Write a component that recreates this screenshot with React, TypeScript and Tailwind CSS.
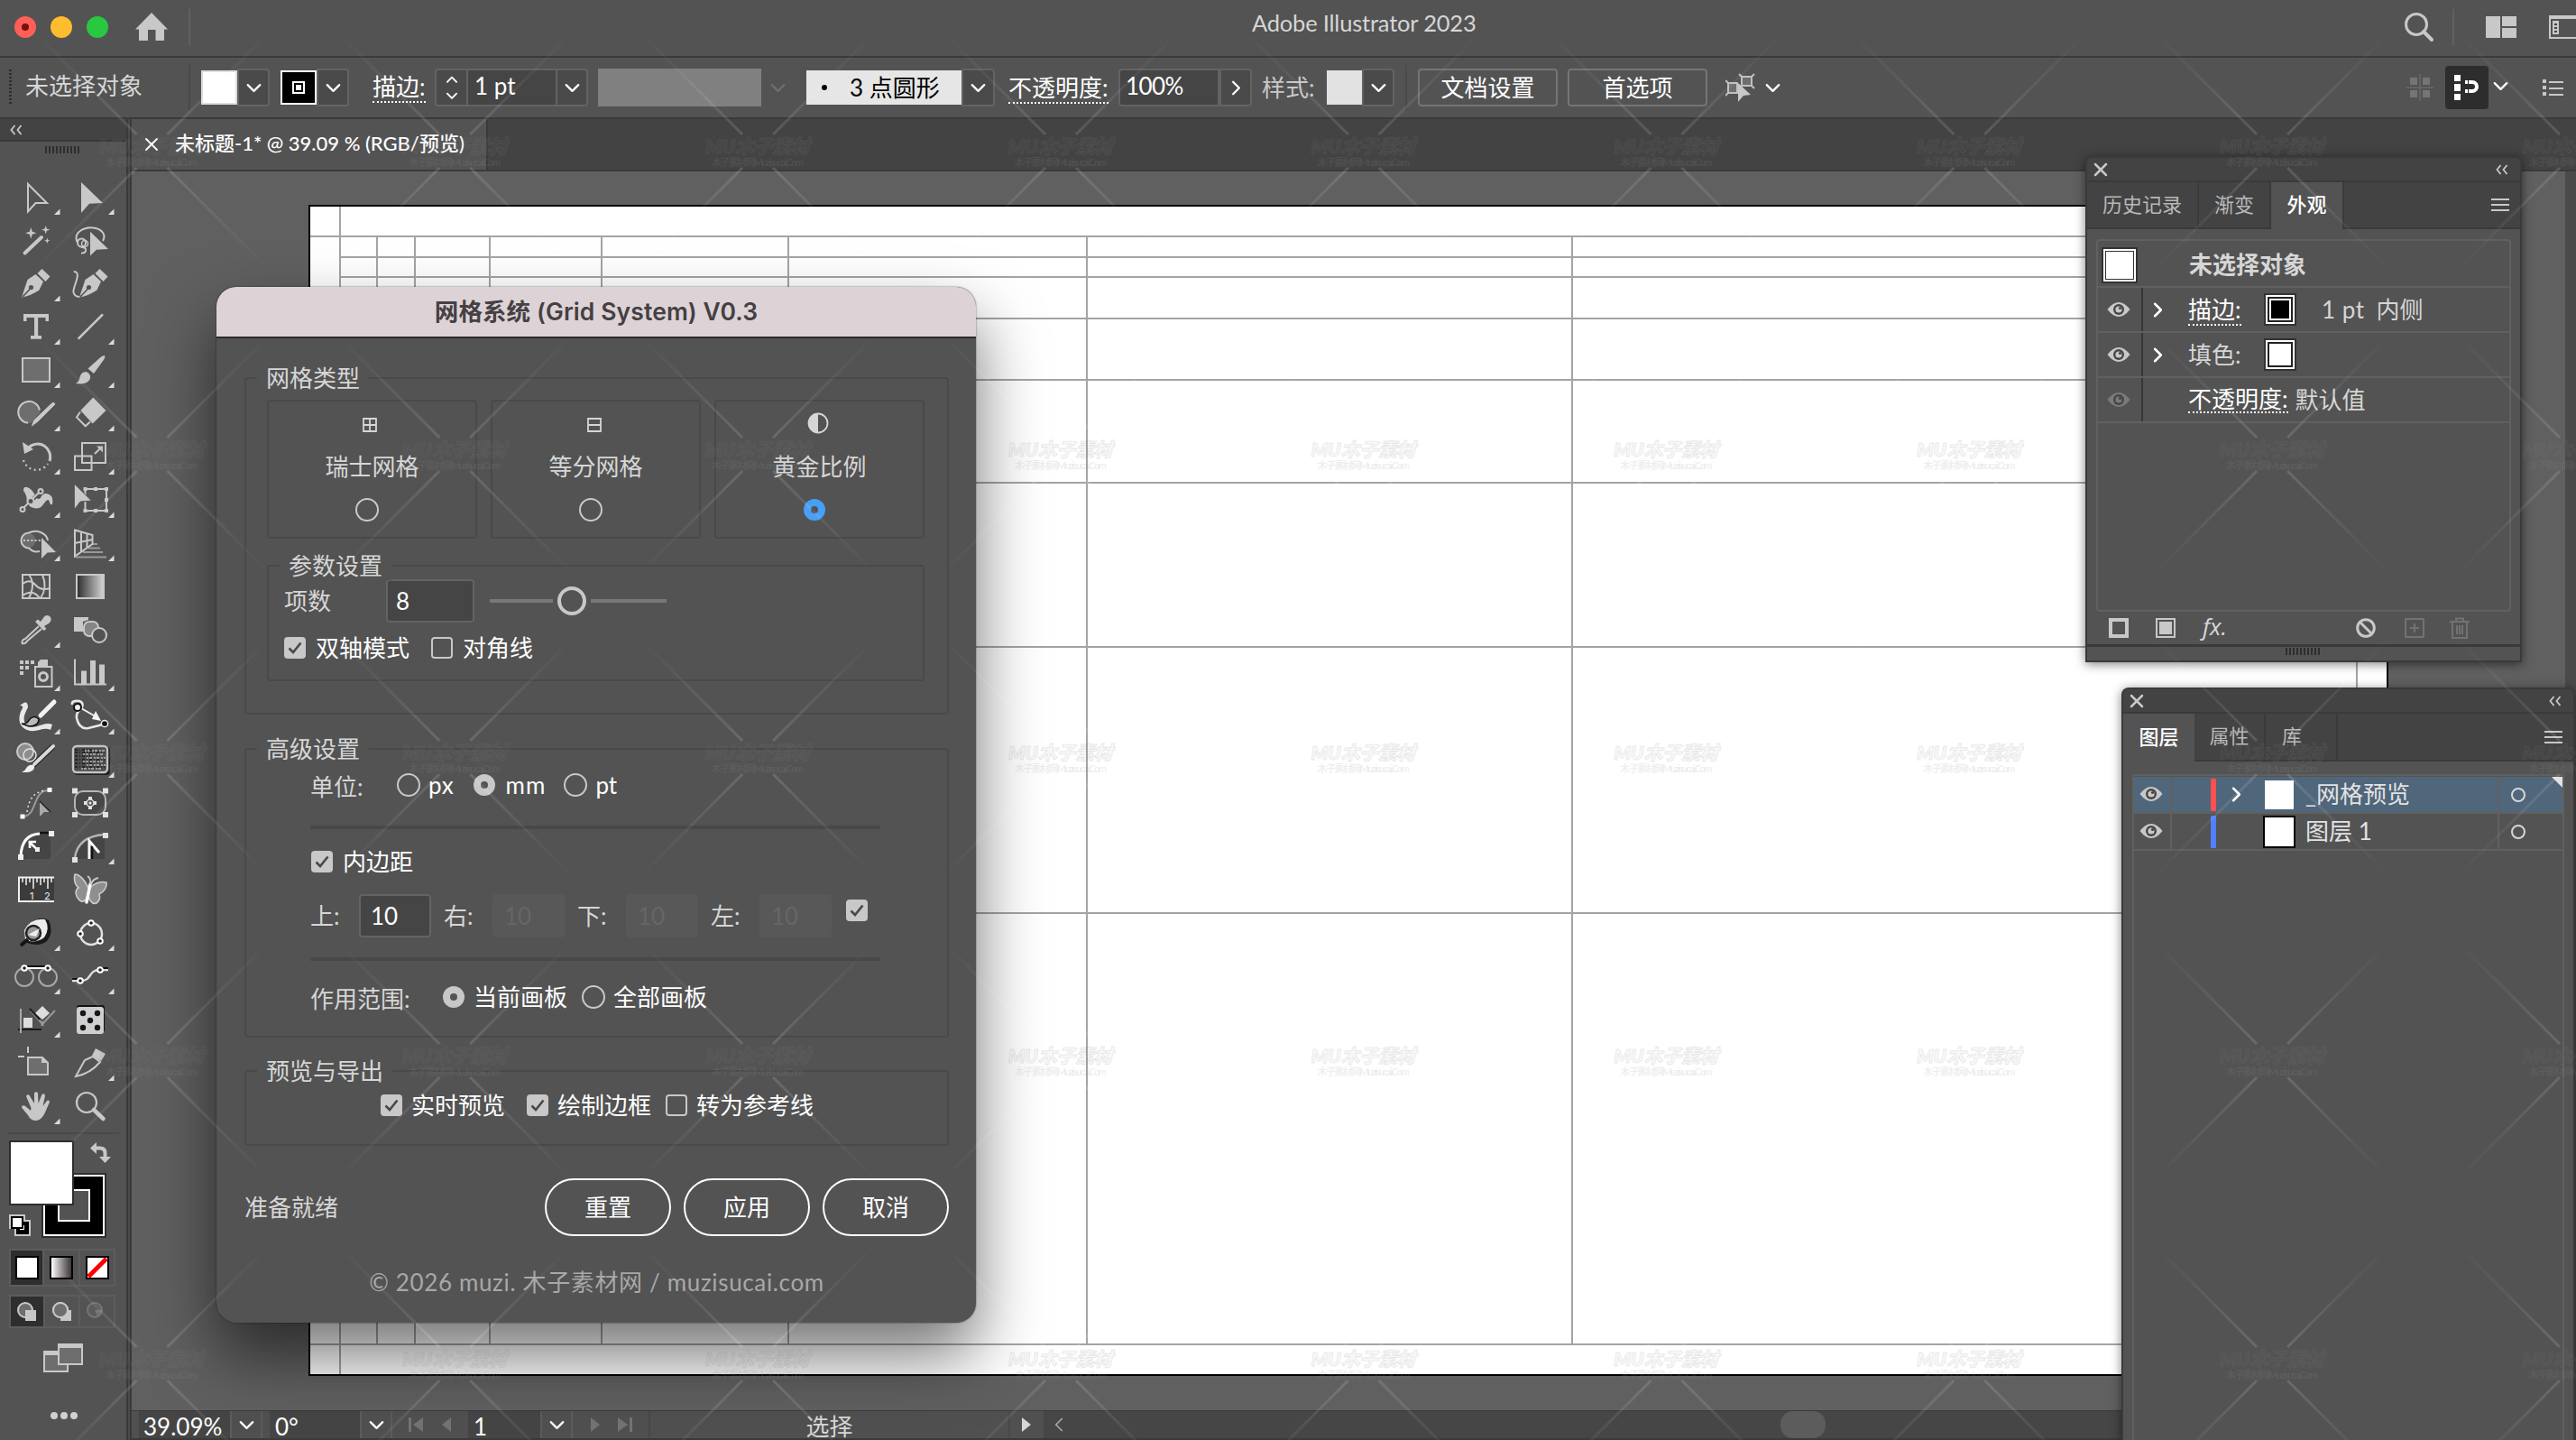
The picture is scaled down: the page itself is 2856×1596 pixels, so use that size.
import type { ReactNode } from 'react'
import clsx from 'clsx'
import { ChevronDown, ChevronLeft, ChevronRight, ChevronUp, X } from 'lucide-react'

type Tool = { id: string; more?: boolean; art: ReactNode }

const line = { fill: 'none', stroke: 'currentColor', strokeWidth: 2 }

const nib = (
  <>
    <path d="M14 38.5 L20.5 19 L29.5 13 L38 21 L33.5 30.5 Q24 37 14 38.5Z" fill="currentColor" />
    <path d="M15 38 L24 28.5" stroke="#535353" strokeWidth="1.6" />
    <circle cx="24.5" cy="27.5" r="2.6" fill="#535353" />
    <path d="M31.5 12 L36.5 7 L45.5 15.5 L40.5 21Z" fill="currentColor" />
  </>
)

const tools: Tool[] = [
  { id: 'select', more: true, art: <path d="M21 9 V39.5 L29.5 30 H42Z" {...line} /> },
  { id: 'direct', more: true, art: <path d="M20 7 V41 L29 30.7 L44 30Z" fill="currentColor" /> },
  {
    id: 'wand',
    art: (
      <>
        <path d="M17.5 37.5 L36 20" stroke="currentColor" strokeWidth="4" strokeLinecap="round" />
        <path d="M24.3 9 L25.8 13.8 L30.5 15.3 L25.8 16.8 L24.3 21.5 L22.8 16.8 L18 15.3 L22.8 13.8Z M40.7 7 L41.8 10.6 L45.3 11.7 L41.8 12.8 L40.7 16.4 L39.6 12.8 L36 11.7 L39.6 10.6Z M42.3 20.5 L43.1 22.9 L45.5 23.7 L43.1 24.5 L42.3 27 L41.5 24.5 L39 23.7 L41.5 22.9Z" fill="currentColor" />
      </>
    ),
  },
  {
    id: 'lasso',
    art: (
      <>
        <path d="M15.5 25 C11 14 24 8.5 33 9.5 C43 10.5 48 17 44 24" {...line} />
        <circle cx="20.5" cy="26" r="4.5" {...line} />
        <circle cx="24" cy="27" r="3.5" {...line} strokeWidth={1.5} />
        <path d="M20 31 Q26 31 25 35 Q24 38 20 37.5" {...line} />
        <path d="M30 13.7 V40.5 L37 33.7 L50 33Z" fill="currentColor" />
      </>
    ),
  },
  { id: 'pen', more: true, art: nib },
  {
    id: 'curvature',
    art: (
      <>
        <g transform="translate(4 0)">{nib}</g>
        <path d="M11.7 10 C22 10 10 28 11.5 33 Q13 38 18 38" {...line} />
      </>
    ),
  },
  { id: 'type', more: true, art: <path d="M16 9 H44 V17 H40.5 V13 H32.2 V33 H36 V36.8 H24 V33 H28 V13 H19.5 V17 H16Z" fill="currentColor" /> },
  { id: 'line', more: true, art: <path d="M16.7 36.7 L44 9.3" {...line} strokeWidth={2.6} /> },
  { id: 'rect', more: true, art: <rect x="15" y="10" width="30" height="26" fill="#6e6e6e" stroke="currentColor" strokeWidth="2" /> },
  {
    id: 'brush',
    more: true,
    art: (
      <>
        <path d="M46 7 Q47 8 45.5 11 L34 27 L27.5 21.5 L42 8.5 Q45 6.5 46 7Z" fill="currentColor" />
        <path d="M25.5 25 Q31 27 30 32.5 Q27 40 14 38 Q18 36 18.5 31 Q20 25 25.5 25Z" fill="currentColor" />
      </>
    ),
  },
  {
    id: 'shaper',
    more: true,
    art: (
      <>
        <circle cx="22.5" cy="22" r="12" fill="#6e6e6e" />
        <path d="M21 33.8 A12 12 0 1 1 34 19.5" {...line} />
        <path d="M47 11.5 Q50 9 52 13 L32 33 L24 39 L26.5 31Z" fill="currentColor" stroke="#535353" strokeWidth="1" />
      </>
    ),
  },
  {
    id: 'eraser',
    more: true,
    art: (
      <>
        <path d="M33.3 5.5 L47.5 20 L32.7 34.5 L19.3 20Z" fill="currentColor" />
        <path d="M19 21.5 L15 27.5 L24.7 37.3 L30 32.5" {...line} />
      </>
    ),
  },
  {
    id: 'rotate',
    more: true,
    art: (
      <>
        <path d="M20 14 C34 2 49 14 45 28" {...line} strokeWidth={3} />
        <path d="M15 7 L17 20 L27 15Z" fill="currentColor" />
        <path d="M16 27 A15 15 0 0 0 43 31" {...line} strokeWidth={2.2} strokeDasharray="2 3.5" />
      </>
    ),
  },
  {
    id: 'scale',
    more: true,
    art: (
      <>
        <rect x="21" y="8" width="26" height="22" {...line} />
        <rect x="13" y="22.5" width="18.5" height="15.5" {...line} />
        <path d="M35 20 L42 13" {...line} />
        <path d="M37 11.5 H44 V18.5Z" fill="currentColor" />
      </>
    ),
  },
  {
    id: 'width',
    more: true,
    art: (
      <>
        <path d="M16 13 Q16 8 20 9 C28 12 29 20 32 22 C36 23 35 16 41 16 Q50 17 48 28 Q46 29 45 26 C44 20 41 24 38 28 C34 35 24 33 20 27 Q20 17 16 13Z" fill="currentColor" />
        <path d="M16 33 L34 15" stroke="#535353" strokeWidth="4" />
        <path d="M16 32 L33 15" {...line} />
        <circle cx="15" cy="33.5" r="2.5" {...line} fill="#535353" />
        <circle cx="35" cy="13.5" r="2.5" {...line} fill="#535353" />
        <circle cx="24" cy="24.5" r="3.5" {...line} fill="#535353" />
      </>
    ),
  },
  {
    id: 'free',
    more: true,
    art: (
      <>
        <rect x="24.5" y="11" width="23.5" height="24" {...line} />
        <path d="M22.5 9 h4 v4 h-4z M34 9 h4 v4 h-4z M46 9 h4 v4 h-4z M46 21 h4 v4 h-4z M46 33 h4 v4 h-4z M34 33 h4 v4 h-4z M22.5 33 h4 v4 h-4z" fill="currentColor" />
        <path d="M12.3 5 V34 L19 25 L31.5 24Z" fill="currentColor" stroke="#535353" />
      </>
    ),
  },
  {
    id: 'builder',
    more: true,
    art: (
      <>
        <circle cx="21" cy="20" r="8.5" fill="#6e6e6e" />
        <path d="M22 11.5 A8.5 8.5 0 1 0 22 28.5 A12.5 12.5 0 0 0 34 32 M22 11.5 A14 12 0 0 1 43 20" {...line} />
        <path d="M16 20 H35" {...line} strokeDasharray="2 2.2" />
        <path d="M36 17 V40 L42.5 33.5 L52 33Z" fill="currentColor" />
      </>
    ),
  },
  {
    id: 'perspective',
    more: true,
    art: (
      <>
        <path d="M13 8.5 L32.5 14 V24 L13 37.5Z M13 23 L32.5 19 M20 10.5 V32 M26.5 12 V28" {...line} />
        <path d="M32 24 H38 M28 28.5 H41 M22 33 H44 M14 38.5 H48" {...line} opacity={0.6} />
      </>
    ),
  },
  {
    id: 'mesh',
    art: <path d="M15 10 H45 V36 H15Z M15 20 Q23 14 29 21 T45 25 M15 33 Q26 25 34 36 M22 10 Q30 20 22 36 M37 10 Q43 24 35 36" {...line} />,
  },
  {
    id: 'gradient',
    art: (
      <>
        <defs>
          <linearGradient id="g1">
            <stop offset="0" stopColor="#2c2c2c" />
            <stop offset="1" stopColor="#d6d6d6" />
          </linearGradient>
        </defs>
        <rect x="15" y="10" width="30" height="26" fill="url(#g1)" stroke="currentColor" strokeWidth="2" />
      </>
    ),
  },
  {
    id: 'eyedropper',
    more: true,
    art: (
      <>
        <path d="M33 19 L18 33 Q14 34 14.5 38 Q18 39 20 35.5 L36 22" {...line} />
        <path d="M29 14 L32 11.5 L35 14 L39 8.5 Q43 5.5 46 9 Q48 13 44 16 L39 19 L41.5 22 L38.5 24Z" fill="currentColor" />
      </>
    ),
  },
  {
    id: 'blend',
    art: (
      <>
        <path d="M12 9 H28 V12 L22 14 V25 H12Z" fill="currentColor" />
        <rect x="23" y="14" width="16" height="16" rx="6" fill="#858585" stroke="currentColor" strokeWidth="2" />
        <circle cx="40" cy="29" r="8" fill="#535353" stroke="currentColor" strokeWidth="2" />
      </>
    ),
  },
  {
    id: 'spray',
    more: true,
    art: (
      <>
        <path d="M12 9 h4 v4 h-4z M18 9 h4 v4 h-4z M24 9 h4 v4 h-4z M12 15 h4 v4 h-4z M18 15 h4 v4 h-4z M12 21 h4 v4 h-4z" fill="currentColor" />
        <path d="M29 16 H47.5 V38 H29Z" {...line} />
        <path d="M32 15 V11 L35 8 H43 V15Z" fill="currentColor" />
        <circle cx="38" cy="27" r="4.5" {...line} strokeWidth={3} />
      </>
    ),
  },
  {
    id: 'chart',
    more: true,
    art: (
      <>
        <path d="M13 7.5 V35.5 H48" {...line} />
        <path d="M20 20.5 h6 V35 h-6z M30 9 h6 V35 h-6z M40 13.5 h6 V35 h-6z" fill="currentColor" />
      </>
    ),
  },
  {
    id: 'ink',
    more: true,
    art: (
      <>
        <path d="M12 11 Q21 3 21 13 C17 20 14 28 20 33 C30 39 38 28 48 32 L46 38 C38 34 30 42 20 38 C8 33 11 20 15 14 Q16 11 12 11Z" fill="#e8e8e8" />
        <path d="M14 31 Q20 32 23 26 Q28 21 33 26 Q33 34 22 34Z" fill="#bbb" stroke="#111" strokeWidth="1.500" />
        <path d="M50 7 L35 22" stroke="#f2f2f2" strokeWidth="5" strokeLinecap="round" />
      </>
    ),
  },
  {
    id: 'warp',
    more: true,
    art: (
      <>
        <path d="M10 10 Q9 5 18 6 Q24 8 20 14 Q14 19 15 25 Q18 38 28 36 L44 32" fill="none" stroke="#e8e8e8" strokeWidth="2.6" />
        <path d="M20 14 L34 22" stroke="#f5f5f5" strokeWidth="2" />
        <path d="M32 26 L36 17 L42 28Z" fill="#f5f5f5" />
        <circle cx="16" cy="13" r="4" fill="#eee" stroke="#111" strokeWidth="2" />
        <circle cx="46" cy="31" r="3.6" fill="#111" stroke="#eee" strokeWidth="1.5" />
      </>
    ),
  },
  {
    id: 'dynamic',
    art: (
      <>
        <circle cx="18" cy="14" r="9" fill="#8d8d8d" stroke="#ccc" strokeWidth="2" />
        <circle cx="23" cy="18" r="7" fill="none" stroke="#e2e2e2" strokeWidth="1.5" />
        <path d="M49 8 L27 29" stroke="#222" strokeWidth="6.500" />
        <path d="M49 8 L28 28" stroke="#d8d8d8" strokeWidth="4" strokeLinecap="round" />
        <path d="M14 37 Q18 35 20 31 Q24 27 28 30 Q29 38 14 37Z" fill="#eee" />
      </>
    ),
  },
  {
    id: 'texture',
    more: true,
    art: (
      <>
        <rect x="12" y="9" width="40" height="31" rx="4" fill="#222" />
        <rect x="11" y="8" width="38" height="29" rx="4" fill="#4c4c4c" stroke="#c4c4c4" strokeWidth="2.4" />
        <path d="M24 13 H46 M22 17 H46 M26 21 H47 M22 25 H46 M26 29 H47 M20 33 H44" stroke="#a0a0a0" strokeWidth="2" strokeDasharray="2 1 3 2" />
        <path d="M13 12 H34 M13 15 H46 M13 19 H30 M13 23 H46 M13 27 H32 M13 31 H46" stroke="#262626" strokeWidth="2" strokeDasharray="3 2 1 2" />
      </>
    ),
  },
  {
    id: 'smart',
    art: (
      <>
        <path d="M15 38 C32 38 25 9 44 9" fill="none" stroke="#9a9a9a" strokeWidth="2" />
        <path d="M20 33 C22 18 28 11 40 9" fill="none" stroke="#ddd" strokeWidth="1.6" strokeDasharray="2 3" />
        <path d="M34 21 V38 L39 33 H46Z" fill="#a8a8a8" />
        <path d="M34 21 L46 33" stroke="#222" strokeWidth="1.5" />
        <path d="M12.5 35.5 h5 v5 h-5z M42.5 6 h5 v5 h-5z" fill="#fff" />
      </>
    ),
  },
  {
    id: 'envelope',
    art: (
      <>
        <rect x="13" y="10" width="34" height="26" rx="9" fill="#474747" stroke="#b5b5b5" strokeWidth="2" />
        <path d="M10 6.5 h6 v6 h-6z M44 6.5 h6 v6 h-6z M10 33 h6 v6 h-6z M44 33 h6 v6 h-6z M28 16 h4 v14 h-4z M23 21 h14 v4 h-14z" fill="#e2e2e2" />
        <circle cx="30" cy="23" r="4" fill="#555" stroke="#e2e2e2" strokeWidth="1.5" />
        <circle cx="30" cy="23" r="1.6" fill="#e2e2e2" />
      </>
    ),
  },
  {
    id: 'corner',
    art: (
      <>
        <path d="M13 38 Q14 9 46 9 V37 H13Z" fill="#454545" />
        <path d="M13 34 Q14 10 34 9" fill="none" stroke="#fff" strokeWidth="3" />
        <path d="M34 8 H46" stroke="#111" strokeWidth="2.5" />
        <path d="M22 18 L33 28 M23 25 V18 H30" fill="none" stroke="#fff" strokeWidth="2.6" />
        <path d="M10 32 h6 v6 h-6z M44 6 h6 v6 h-6z M29 24 h5 v5 h-5z" fill="#eee" />
      </>
    ),
  },
  {
    id: 'extend',
    more: true,
    art: (
      <>
        <path d="M13 37 Q16 12 46 10 V37Z" fill="#454545" />
        <path d="M13 36 Q16 12 46 10" fill="none" stroke="#b5b5b5" strokeWidth="2.4" />
        <path d="M29 37 V17 L40 30" fill="none" stroke="#fff" strokeWidth="3" />
        <path d="M32 37 V23" stroke="#111" strokeWidth="2.5" />
        <path d="M10 35 h6 v6 h-6z M44 8 h6 v6 h-6z" fill="#e2e2e2" />
      </>
    ),
  },
  {
    id: 'ruler',
    art: (
      <>
        <rect x="11" y="9" width="39" height="27" fill="#3c3c3c" />
        <path d="M50 9.5 H11 V36 H50" fill="none" stroke="#f0f0f0" strokeWidth="2" />
        <path d="M15 10 v5 M19 10 v8 M23 10 v5 M27 10 v12 M31 10 v5 M35 10 v8 M39 10 v5 M43 10 v12 M47 10 v5" stroke="#f0f0f0" strokeWidth="1.5" />
        <text x="23" y="34" fontSize="11" fill="#eee" fontFamily="Inter, sans-serif">1</text>
        <text x="39" y="34" fontSize="11" fill="#eee" fontFamily="Inter, sans-serif">2</text>
      </>
    ),
  },
  {
    id: 'butterfly',
    art: (
      <>
        <path d="M28 21 C24 12 18 6 13 6 C11 12 14 19 17 21 C12 24 14 32 20 36 C24 37 27 32 28 28 C28 34 32 40 37 38 C41 35 41 31 40 28 C45 26 49 20 48 15 C41 13 33 17 30 21Z" fill="#8f8f8f" stroke="#ccc" strokeWidth="1.6" />
        <path d="M30 17 L26 37" stroke="#fff" strokeWidth="3.5" strokeLinecap="round" />
        <path d="M30 17 Q31 10 27 8 M31 17 Q33 11 39 10" fill="none" stroke="#ccc" strokeWidth="1.8" />
      </>
    ),
  },
  {
    id: 'magnify',
    more: true,
    art: (
      <>
        <path d="M22 13 Q34 3 44 9 Q50 22 42 32 Q34 39 20 34Z" fill="#191919" />
        <path d="M17 20 Q24 6 40 8 Q46 18 39 28 Q30 35 18 31Z" fill="#ededed" />
        <circle cx="27" cy="23" r="8" fill="#999" stroke="#222" strokeWidth="2.5" />
        <path d="M21 30 L13 37" stroke="#151515" strokeWidth="4" />
        <path d="M21 25 L34 18 L30 27Z" fill="#eee" />
      </>
    ),
  },
  {
    id: 'ring',
    more: true,
    art: (
      <>
        <circle cx="31" cy="24" r="12" fill="none" stroke="#e0e0e0" strokeWidth="2.5" />
        <g fill="#222" stroke="#fff" strokeWidth="2">
          <circle cx="31" cy="12" r="2.8" />
          <circle cx="19" cy="24" r="2.8" />
          <circle cx="41" cy="32" r="2.8" />
        </g>
      </>
    ),
  },
  {
    id: 'tangent',
    more: true,
    art: (
      <>
        <circle cx="17" cy="24" r="10" fill="none" stroke="#a8a8a8" strokeWidth="2" />
        <circle cx="43" cy="24" r="10" fill="none" stroke="#a8a8a8" strokeWidth="2" />
        <path d="M17 14 H43" stroke="#fff" strokeWidth="2" />
        <path d="M20 12 H40" stroke="#111" strokeWidth="2" />
        <circle cx="17" cy="14" r="2.8" fill="#222" stroke="#fff" strokeWidth="2" />
        <circle cx="43" cy="14" r="2.8" fill="#222" stroke="#fff" strokeWidth="2" />
      </>
    ),
  },
  {
    id: 'connect',
    more: true,
    art: (
      <>
        <path d="M10 28 H20 C32 28 28 16 40 16 H50" fill="none" stroke="#ddd" strokeWidth="2.4" />
        <path d="M10 26 H16 M44 14 H50" stroke="#111" strokeWidth="2" />
        <circle cx="19" cy="28" r="2.8" fill="#222" stroke="#fff" strokeWidth="2" />
        <circle cx="41" cy="16" r="2.8" fill="#222" stroke="#fff" strokeWidth="2" />
      </>
    ),
  },
  {
    id: 'orient',
    more: true,
    art: (
      <>
        <path d="M10 34 H36" stroke="#1c1c1c" strokeWidth="2" />
        <path d="M13 11 V38" stroke="#aaa" strokeWidth="2" />
        <path d="M16 21 h10 v11 h-10z M37 8 L45 16 L37 23 L29 16Z" fill="#ddd" />
        <path d="M24 13 L37 28 L51 13" fill="none" stroke="#999" strokeWidth="2" />
        <path d="M23 11 L34 23" stroke="#1c1c1c" strokeWidth="2" />
        <path d="M37 25 V30" stroke="#999" strokeWidth="3" />
      </>
    ),
  },
  {
    id: 'dice',
    art: (
      <>
        <rect x="15" y="7" width="31" height="30" rx="3" fill="#111" />
        <rect x="15" y="9" width="30" height="30" rx="3" fill="#cfcfd2" />
        <g fill="#161616">
          <circle cx="22" cy="16" r="3.2" />
          <circle cx="38" cy="16" r="3.2" />
          <circle cx="30" cy="24" r="3.2" />
          <circle cx="22" cy="32" r="3.2" />
          <circle cx="38" cy="32" r="3.2" />
        </g>
      </>
    ),
  },
  {
    id: 'artboard',
    art: (
      <>
        <path d="M10 16 H17 M21 5 V12" {...line} />
        <path d="M21 17 H37 L43 23 V36 H21Z" fill="#6e6e6e" stroke="currentColor" strokeWidth="2" />
        <path d="M36 16 V23 H43Z" fill="currentColor" />
      </>
    ),
  },
  {
    id: 'slice',
    more: true,
    art: (
      <>
        <path d="M14 38 L24 20 L33 16 L41 22 Q30 35 14 38Z" {...line} />
        <path d="M36 7 L47 13 L42 21 L32 15Z" fill="currentColor" />
      </>
    ),
  },
  {
    id: 'hand',
    more: true,
    art: <path d="M24.5 25 L19 12 Q20 9 22.5 11 L28 20 L28 8.5 Q30 6 32 8.5 L32.5 20 L36.5 10 Q39.5 8 40 11.5 L37.5 23 L42 17 Q45 15.5 45 18.5 L39 32 Q35 39 30 39 Q24 39 21 33 L14 24.5 Q14 21.5 17.5 22.5 L24 28Z" fill="currentColor" />,
  },
  {
    id: 'zoom',
    art: (
      <>
        <circle cx="26" cy="19" r="11" {...line} strokeWidth={2.2} />
        <path d="M34 27 L44.5 37" stroke="currentColor" strokeWidth="4.5" strokeLinecap="round" />
      </>
    ),
  },
]

const fib = [0, 1, 2, 4, 7, 12, 20, 33, 54]

function Artboard() {
  return (
    <div className="absolute left-[196px] top-[37px] h-[1298px] w-[2306px] border-2 border-black bg-white">
      <svg width="2302" height="1294" className="block" shapeRendering="crispEdges" stroke="#a4a4a4" strokeWidth="2">
        {fib.map((n, i) => {
          const edge = i === 0 || i === 8
          const x = Math.round(33 + n * 41.4)
          const y = Math.round(33 + n * 22.74)
          return (
            <g key={n}>
              <path d={`M${x} ${edge ? 0 : 33} V${edge ? 1294 : 1261}`} />
              <path d={`M${edge ? 0 : 33} ${y} H${edge ? 2302 : 2268}`} />
            </g>
          )
        })}
      </svg>
    </div>
  )
}

function Check({ on, children }: { on?: boolean; children?: ReactNode }) {
  return (
    <span className="flex h-6 items-center gap-[10px] text-white">
      <span className={clsx('flex h-6 w-6 items-center justify-center rounded', on ? 'bg-[#c8c8c8]' : 'border-2 border-[#c8c8c8]')}>
        {on && (
          <svg width="18" height="18" viewBox="0 0 18 18" fill="none" stroke="#484848" strokeWidth="2.6">
            <path d="M2.5 9.5 L7 14 L15.5 3.5" />
          </svg>
        )}
      </span>
      {children}
    </span>
  )
}

function Radio({ on, blue, children }: { on?: boolean; blue?: boolean; children?: ReactNode }) {
  return (
    <span className="flex items-center gap-[9px] text-white">
      <span className="flex h-[26px] w-[26px] items-center justify-center">
        {on ? (
          <span className={clsx('h-6 w-6 rounded-full border-8', blue ? 'border-[#46a0f5]' : 'border-[#c8c8c8]')} />
        ) : (
          <span className="h-[26px] w-[26px] rounded-full border-2 border-[#c8c8c8]" />
        )}
      </span>
      {children}
    </span>
  )
}

function Group({ title, className, children }: { title: string; className?: string; children: ReactNode }) {
  return (
    <section className={clsx('relative rounded border-2 border-[#494949]', className)}>
      <h3 className="absolute -top-px left-[12px] -translate-y-1/2 bg-[#535353] px-[10px] leading-8 text-[#d6d6d6]">{title}</h3>
      {children}
    </section>
  )
}

const gridTypes = [
  { name: '瑞士网格', icon: <path d="M1 1 H15 V15 H1Z M8 1 V15 M1 8 H15" fill="none" stroke="#d6d6d6" strokeWidth="1.8" /> },
  { name: '等分网格', icon: <path d="M2 1 H16 V15 H2Z M2 8 H16" fill="none" stroke="#d6d6d6" strokeWidth="1.8" /> },
  {
    name: '黄金比例',
    on: true,
    icon: (
      <>
        <circle cx="9" cy="6" r="10.5" fill="none" stroke="#d6d6d6" strokeWidth="1.8" />
        <path d="M9 -4.5 A10.5 10.5 0 0 0 9 16.5Z" fill="#d6d6d6" />
      </>
    ),
  },
]

function GridDialog() {
  return (
    <div className="absolute left-[240px] top-[318px] flex h-[1148px] w-[842px] flex-col overflow-hidden rounded-[22px] bg-[#535353] text-[26px] leading-8 text-[#d6d6d6] shadow-[0_36px_72px_rgba(0,0,0,0.55),0_0_2px_rgba(0,0,0,0.6)]">
      <div className="flex h-[57px] shrink-0 items-center justify-center border-b-2 border-[#2f282b] bg-[#ddd3d7] pb-[2px] font-['Inter','Noto_Sans_CJK_SC',sans-serif] text-[26.5px] font-semibold tracking-[0.1px] text-[#454043]">
        网格系统 (Grid System) V0.3
      </div>
      <div className="flex flex-1 flex-col pl-[31px] pr-[30px]">
        <Group title="网格类型" className="mt-[43px] h-[374px] px-[23px] pt-[23px]">
          <div className="flex gap-[15px]">
            {gridTypes.map((t) => (
              <div key={t.name} className="flex h-[154px] w-[233px] flex-col items-center rounded border-2 border-[#494949]">
                <svg width="16" height="16" viewBox="0 0 16 16" className="mt-[18px] -ml-[6px] shrink-0 overflow-visible">{t.icon}</svg>
                <span className="mt-[22px]">{t.name}</span>
                <span className="mt-[19px] -ml-[12px]"><Radio on={t.on} blue /></span>
              </div>
            ))}
          </div>
          <Group title="参数设置" className="mt-[29px] h-[129px] w-[729px] pl-[17px] pt-[14px]">
            <div className="flex h-[48px] items-center">
              <span className="w-[113px]">项数</span>
              <span className="flex h-[48px] w-[98px] items-center rounded border-2 border-[#636363] bg-[#454545] pl-[9px] text-white">8</span>
              <span className="ml-[17px] h-1 w-[70px] bg-[#787878]" />
              <span className="mx-[5px] h-8 w-8 rounded-full border-4 border-[#c8c8c8]" />
              <span className="h-1 w-[84px] bg-[#787878]" />
            </div>
            <div className="mt-[16px] flex gap-[24px]">
              <Check on><span className="ml-px">双轴模式</span></Check>
              <Check><span className="ml-px">对角线</span></Check>
            </div>
          </Group>
        </Group>

        <Group title="高级设置" className="mt-[37px] h-[321px] pl-[71px] pt-[15px]">
          <div className="flex h-[48px] items-center">
            <span className="w-[96px] pt-1">单位:</span>
            <Radio><span className="tracking-[0.8px]">px</span></Radio>
            <span className="ml-[20px]"><Radio on><span className="ml-[2px] tracking-[1px]">mm</span></Radio></span>
            <span className="ml-[20px]"><Radio>pt</Radio></span>
          </div>
          <div className="mt-[21px] h-1 w-[632px] bg-[#484848]" />
          <div className="mt-[24px] pl-[1px]"><Check on><span className="ml-px">内边距</span></Check></div>
          <div className="mt-[24px] flex h-[48px] items-center">
            <span className="w-[54px]">上:</span>
            <span className="flex h-full w-[80px] items-center rounded border-2 border-[#636363] bg-[#454545] pl-[11px] text-white">10</span>
            {['右', '下', '左'].map((s) => (
              <span key={s} className="flex h-full items-center">
                <span className="ml-[14px] w-[54px]">{s}:</span>
                <span className="flex h-full w-[80px] items-center rounded bg-[#585858] pl-[13px] text-[#666]">10</span>
              </span>
            ))}
            <span className="-mt-[12px] ml-[16px]"><Check on /></span>
          </div>
          <div className="mt-[22px] h-1 w-[632px] bg-[#484848]" />
          <div className="mt-[20px] flex h-[40px] items-center">
            <span className="w-[146px] pt-1">作用范围:</span>
            <Radio on>当前画板</Radio>
            <span className="ml-[16px]"><Radio>全部画板</Radio></span>
          </div>
        </Group>

        <Group title="预览与导出" className="mt-[36px] h-[84px] pl-[149px] pt-[25px]">
          <div className="flex">
            <Check on>实时预览</Check>
            <span className="ml-[24px]"><Check on>绘制边框</Check></span>
            <span className="ml-[16px]"><Check>转为参考线</Check></span>
          </div>
        </Group>

        <div className="mt-[36px] flex h-[64px] items-center gap-[14px]">
          <span className="flex-1">准备就绪</span>
          {['重置', '应用', '取消'].map((b) => (
            <button key={b} className="h-[64px] w-[140px] rounded-full border-2 border-white text-white">{b}</button>
          ))}
        </div>
        <p className="mt-[35px] whitespace-nowrap text-center tracking-[0.65px] text-[#a8a8a8]">© 2026 muzi. 木子素材网 / muzisucai.com</p>
      </div>
    </div>
  )
}

function Eye({ dim }: { dim?: boolean }) {
  return (
    <svg width="26" height="18" viewBox="0 0 26 18" className={dim ? 'text-[#7a7a7a]' : 'text-[#c8c8c8]'}>
      <path d="M0.5 9 Q13 -7 25.5 9 Q13 25 0.5 9Z" fill="currentColor" />
      <circle cx="13" cy="9" r="6" fill="#454545" />
      <circle cx="13" cy="9" r="3.6" fill="currentColor" />
      <circle cx="14.5" cy="7.5" r="1.6" fill="#454545" />
    </svg>
  )
}

function Collapse() {
  return (
    <svg width="14" height="12" viewBox="0 0 14 12" fill="none" stroke="#c8c8c8" strokeWidth="1.8">
      <path d="M5.5 1 L1.5 6 L5.5 11 M12.5 1 L8.5 6 L12.5 11" />
    </svg>
  )
}

function PanelHead() {
  return (
    <div className="flex h-[27px] shrink-0 items-center justify-between border-b-2 border-[#3a3a3a] bg-[#434343] pl-[3px] pr-[13px]">
      <X size={24} strokeWidth={2.5} color="#c8c8c8" />
      <Collapse />
    </div>
  )
}

function MenuIcon() {
  return (
    <svg width="20" height="14" className="ml-auto mr-[12px]" fill="#c8c8c8">
      <path d="M0 0 h20 v2 h-20z M0 6 h20 v2 h-20z M0 12 h20 v2 h-20z" />
    </svg>
  )
}

function PanelTab({ on, className, children }: { on?: boolean; className: string; children: ReactNode }) {
  return (
    <span className={clsx('flex h-full items-center justify-center', className, on ? 'bg-[#535353] pb-[3px] font-medium text-white' : 'border-b-2 border-r-2 border-[#3a3a3a] pb-[2px] text-[#b8b8b8]')}>
      {children}
    </span>
  )
}

function AppearancePanel() {
  const row = 'flex h-[50px] items-center border-b-2 border-[#606060]'
  const eye = 'flex h-full w-[50px] items-center justify-center border-r-2 border-[#363636] pr-[2px]'
  return (
    <div className="absolute left-[2312px] top-[173px] flex h-[561px] w-[484px] flex-col overflow-hidden rounded-t-lg border-2 border-[#3a3a3a] bg-[#535353] text-[26px] text-[#d6d6d6] shadow-[0_2px_12px_rgba(0,0,0,0.5)]">
      <PanelHead />
      <div className="flex h-[52px] items-center bg-[#434343] text-[22px]">
        <PanelTab className="w-[124px]">历史记录</PanelTab>
        <PanelTab className="w-[80px]">渐变</PanelTab>
        <PanelTab on className="w-[79px]">外观</PanelTab>
        <div className="flex h-full flex-1 items-center border-b-2 border-l-2 border-[#3a3a3a]">
          <MenuIcon />
        </div>
      </div>
      <div className="ml-[10px] mt-[11px] h-[413px] w-[460px] rounded border-2 border-[#606060]">
        <div className="flex h-[52px] items-center border-b-2 border-[#606060] pt-[3px]">
          <span className="ml-[4px] h-10 w-10 border-2 border-[#333] bg-white p-[2px]"><span className="block h-full w-full border border-[#333]" /></span>
          <span className="ml-[57px] font-bold">未选择对象</span>
        </div>
        <div className={row}>
          <span className={eye}><Eye /></span>
          <ChevronRight size={27} strokeWidth={2.2} className="ml-[3px] text-white" />
          <span className="ml-[20px] w-[84px] text-white"><span className="border-b-2 border-dotted border-white leading-7">描边:</span></span>
          <span className="h-9 w-9 border-2 border-[#333] bg-white p-[2px]">
            <span className="block h-full w-full border-2 border-[#222] bg-white p-[2px]"><span className="block h-full w-full bg-black" /></span>
          </span>
          <span className="ml-[28px] tracking-[0.5px]">1 pt</span>
          <span className="ml-[13px]">内侧</span>
        </div>
        <div className={row}>
          <span className={eye}><Eye /></span>
          <ChevronRight size={27} strokeWidth={2.2} className="ml-[3px] text-white" />
          <span className="ml-[20px] w-[84px]">填色:</span>
          <span className="h-9 w-9 border-2 border-[#333] bg-white p-[2px]"><span className="block h-full w-full border-2 border-[#222]" /></span>
        </div>
        <div className={row}>
          <span className={eye}><Eye dim /></span>
          <span className="ml-[50px] border-b-2 border-dotted border-white leading-7 text-white">不透明度:</span>
          <span className="ml-[8px]">默认值</span>
        </div>
      </div>
      <div className="flex h-[39px] items-center border-b-[3px] border-[#3a3a3a] pl-[24px]">
        <span className="h-[22px] w-[22px] border-4 border-[#c8c8c8]" />
        <span className="ml-[30px] h-[22px] w-[22px] border-2 border-[#c8c8c8] p-[2px]"><span className="block h-full w-full bg-[#c8c8c8]" /></span>
        <span className="ml-[30px] w-[157px] font-['Open_Sans',sans-serif] text-[26px] italic leading-7">
          <span className="-mt-1 block">fx.</span>
        </span>
        <svg width="22" height="22" viewBox="0 0 22 22" className="ml-[13px]" fill="none" stroke="#c8c8c8" strokeWidth="3">
          <circle cx="11" cy="11" r="9.3" />
          <path d="M4.5 4.5 L17.5 17.5" />
        </svg>
        <svg width="22" height="22" viewBox="0 0 22 22" className="ml-[32px]" fill="none" stroke="#727272" strokeWidth="2">
          <path d="M1 1 H21 V21 H1Z M11 6 V16 M6 11 H16" />
        </svg>
        <svg width="22" height="24" viewBox="0 0 22 24" className="ml-[28px]" fill="none" stroke="#727272" strokeWidth="2">
          <path d="M0 5 H22 M7 5 V1.5 H15 V5 M3 5 V23 H19 V5 M8 9 V19 M11 9 V19 M14 9 V19" />
        </svg>
      </div>
      <Grip className="ml-[220px] mt-[1px] w-[38px]" />
    </div>
  )
}

function Grip({ className }: { className: string }) {
  return <div className={clsx('h-2 bg-[repeating-linear-gradient(90deg,#2e2e2e_0_2px,transparent_2px_4px)]', className)} />
}

const layers = [
  { name: '_网格预览', bar: 'bg-[#ff4f4f]', on: true },
  { name: '图层 1', bar: 'bg-[#4f80ff]' },
]

function LayersPanel() {
  return (
    <div className="absolute left-[2352px] top-[762px] flex h-[834px] w-[503px] flex-col overflow-hidden rounded-t-lg border-x-2 border-t-2 border-[#3a3a3a] bg-[#535353] text-[26px] text-[#e2e2e2] shadow-[0_2px_12px_rgba(0,0,0,0.5)]">
      <PanelHead />
      <div className="flex h-[53px] items-center bg-[#434343] text-[22px]">
        <PanelTab on className="w-[79px]">图层</PanelTab>
        <PanelTab className="w-[79px]">属性</PanelTab>
        <PanelTab className="w-[80px] pr-[20px]">库</PanelTab>
        <div className="flex h-full flex-1 items-center border-b-2 border-[#3a3a3a]">
          <MenuIcon />
        </div>
      </div>
      <div className="ml-[10px] mt-[14px] w-[479px] flex-1 border-x-2 border-t-2 border-[#606060] pt-px">
        {layers.map((l) => (
          <div key={l.name} className={clsx('relative flex h-[41px] items-center border-b-2 border-[#606060]', l.on && 'bg-[#50667b]')}>
            <span className="flex h-full w-[42px] items-center justify-center border-r-2 border-[#606060] pb-[2px] pr-[2px]"><Eye /></span>
            <span className={clsx('ml-[43px] h-[36px] w-[6px]', l.bar)} />
            <span className="ml-[9px] w-[43px]">{l.on && <ChevronRight size={27} strokeWidth={2.2} className="text-white" />}</span>
            <span className={clsx('h-9 w-9 bg-white', l.on ? 'border-2 border-[#50667b]' : 'border-2 border-black')} />
            <span className="ml-[11px] flex-1">{l.name}</span>
            <span className="flex h-full w-[72px] items-center border-l-2 border-[#606060] pl-[13px]">
              <span className="h-4 w-4 rounded-full border-2 border-[#d6d6d6]" />
            </span>
            {l.on && <svg width="12" height="12" className="absolute right-0 top-0"><path d="M0 0 H12 V12Z" fill="#e2e2e2" /></svg>}
          </div>
        ))}
      </div>
    </div>
  )
}

function Drop({ className = 'w-[36px]', dim, children }: { className?: string; dim?: boolean; children?: ReactNode }) {
  return (
    <span className={clsx('flex h-[42px] items-center justify-center rounded-r border-2', dim ? 'border-transparent text-[#6e6e6e]' : 'border-[#636363] bg-[#4a4a4a] text-white', className)}>
      {children ?? <ChevronDown size={27} strokeWidth={2} />}
    </span>
  )
}

function ControlBar() {
  return (
    <div className="flex h-[68px] shrink-0 items-center border-b-2 border-[#3a3a3a] text-[26px]">
      <span className="ml-[10px] h-[40px] w-[3px] bg-[repeating-linear-gradient(180deg,#2e2e2e_0_2px,transparent_2px_4px)]" />
      <span className="ml-[15px] w-[181px] pb-[3px] text-[#d6d6d6]">未选择对象</span>
      <span className="h-[50px] w-[2px] bg-[#4a4a4a]" />
      <span className="ml-[12px] h-[38px] w-[40px] border-2 border-[#ddd] bg-white" />
      <Drop />
      <span className="ml-[12px] flex h-[38px] w-[40px] items-center justify-center border-2 border-white bg-black">
        <span className="h-[14px] w-[14px] border-2 border-white p-[2px]"><span className="block h-full w-full bg-white" /></span>
      </span>
      <Drop />
      <span className="ml-[26px] w-[69px] pb-[2px] text-white"><span className="border-b-2 border-dotted border-white leading-7">描边:</span></span>
      <span className="flex h-[42px] w-[37px] flex-col items-center justify-center rounded-l border-2 border-[#636363] bg-[#4a4a4a] text-white">
        <ChevronUp size={24} strokeWidth={2.2} className="-mb-[3px]" />
        <ChevronDown size={24} strokeWidth={2.2} />
      </span>
      <span className="flex h-[42px] w-[97px] items-center border-y-2 border-[#636363] bg-[#454545] pb-[4px] pl-[7px] text-white">1 pt</span>
      <Drop />
      <span className="ml-[11px] h-[42px] w-[181px] bg-[#808080]" />
      <Drop dim />
      <span className="ml-[14px] flex h-[38px] w-[172px] items-center bg-[#e6e6e6] text-black">
        <span className="ml-[17px] h-[6px] w-[6px] rounded-full bg-black" />
        <span className="ml-[25px]">3 点圆形</span>
      </span>
      <Drop className="w-[37px]" />
      <span className="ml-[15px] w-[122px] text-white"><span className="border-b-2 border-dotted border-white leading-7">不透明度:</span></span>
      <span className="flex h-[42px] w-[112px] items-center rounded-l border-2 border-[#636363] bg-[#454545] pb-[4px] pl-[6px] tracking-[-0.6px] text-white">100%</span>
      <Drop><ChevronRight size={27} strokeWidth={2} /></Drop>
      <span className="ml-[11px] w-[72px] text-[#c8c8c8]">样式:</span>
      <span className="h-[38px] w-[39px] bg-[#e2e2e2]" />
      <Drop />
      <span className="ml-[12px] h-[50px] w-[2px] bg-[#4a4a4a]" />
      <span className="ml-[12px] flex h-[42px] w-[155px] items-center justify-center rounded border-2 border-[#757575] text-white">文档设置</span>
      <span className="ml-[11px] flex h-[42px] w-[155px] items-center justify-center rounded border-2 border-[#757575] text-white">首选项</span>
      <svg width="34" height="34" viewBox="0 0 34 34" className="ml-[20px]" fill="#6e6e6e" stroke="#c0c0c0" strokeWidth="2">
        <path d="M3 12 H13 V23 H3Z M18 5 H29 V15 H18Z" />
        <path d="M0 9 L3 12 M0 26 L3 23 M15 2 L18 5 M32 2 L29 5 M32 18 L29 15" />
        <path d="M14 12 V33 L20 26 L28 25Z" fill="#c8c8c8" stroke="none" />
      </svg>
      <ChevronDown size={27} strokeWidth={2} className="ml-[5px] text-white" />
      <div className="ml-auto flex items-center pr-[14px]">
        <svg width="30" height="30" viewBox="0 0 30 30" fill="#757575">
          <path d="M4 4 h8 v8 h-8z M18 4 h8 v8 h-8z M4 18 h8 v8 h-8z M18 18 h8 v8 h-8z" />
          <path d="M15 0 V30 M0 15 H30" stroke="#6a6a6a" strokeWidth="1.5" />
        </svg>
        <span className="ml-[13px] flex h-[48px] w-[48px] items-center justify-center rounded bg-[#2d2d2d]">
          <svg width="28" height="28" viewBox="0 0 28 28" fill="#fff">
            <path d="M0 0 h7 v7 h-7z M0 10 h7 v8 h-7z M0 21 h7 v7 h-7z M12 6 h3 v4 h-3z M12 16 h3 v4 h-3z" />
            <path d="M16 8 H20 A5 5 0 0 1 20 18 H16" fill="none" stroke="#fff" strokeWidth="4" />
          </svg>
        </span>
        <ChevronDown size={27} strokeWidth={2} className="-mt-1 mr-[33px] text-white" />
        <svg width="23" height="18" viewBox="0 0 23 18" fill="#c8c8c8">
          <path d="M0 0 h4 v4 h-4z M0 7 h4 v4 h-4z M0 14 h4 v4 h-4z M7 2 h16 v2 h-16z M7 9 h16 v2 h-16z M7 16 h16 v2 h-16z" />
        </svg>
      </div>
    </div>
  )
}

function TitleBar() {
  return (
    <div className="relative flex h-[64px] shrink-0 items-center border-b-2 border-[#3a3a3a] pb-[3px]">
      <span className="ml-[16px] flex h-6 w-6 items-center justify-center rounded-full bg-[#ff5f57]"><span className="h-2 w-2 rounded-full bg-[#7a0f0a]" /></span>
      <span className="ml-[16px] h-6 w-6 rounded-full bg-[#febc2e]" />
      <span className="ml-[16px] h-6 w-6 rounded-full bg-[#28c840]" />
      <svg width="36" height="32" viewBox="0 0 36 32" className="ml-[30px]" fill="#c8c8c8">
        <path d="M18 0 L36 18.5 H32 V31 H22.5 V19 H14 V31 H4 V18.5 H0Z" />
      </svg>
      <span className="ml-[23px] h-10 w-[2px] bg-[#606060]" />
      <span className="absolute left-[1388px] top-[9px] text-[25.5px] leading-8 tracking-[-0.2px] text-[#d6d6d6]">Adobe Illustrator 2023</span>
      <div className="ml-auto flex items-center">
        <svg width="34" height="34" viewBox="0 0 34 34" fill="none" stroke="#c8c8c8" strokeWidth="3">
          <circle cx="14" cy="14" r="11.5" />
          <path d="M22 22 L31 31" strokeWidth="4" strokeLinecap="round" />
        </svg>
        <span className="ml-[20px] h-10 w-[2px] bg-[#606060]" />
        <svg width="34" height="24" viewBox="0 0 34 24" className="ml-[35px]" fill="#c8c8c8">
          <path d="M0 0 h16 v24 h-16z M18 0 h16 v11 h-16z M18 13 h16 v11 h-16z" />
        </svg>
        <svg width="30" height="26" viewBox="0 0 30 26" className="ml-[36px]">
          <path d="M1 2 H40 V25 H1Z" fill="none" stroke="#c8c8c8" strokeWidth="2" />
          <path d="M0 0 H30 V4 H0Z M4 6 h7 v15 h-7z" fill="#c8c8c8" />
          <path d="M6 9 h3 v2 h-3z M6 13 h3 v2 h-3z M6 17 h3 v2 h-3z" fill="#444" />
        </svg>
      </div>
    </div>
  )
}

function Toolbox() {
  return (
    <div className="flex w-[140px] shrink-0 flex-col text-[#c8c8c8]">
      <div className="flex h-[25px] shrink-0 items-center border-b-2 border-[#3a3a3a] bg-[#434343] pl-[11px]"><Collapse /></div>
      <Grip className="ml-[50px] mt-[5px] w-[38px] shrink-0" />
      <div className="ml-[10px] mt-[25px] grid shrink-0 grid-cols-[60px_60px]">
        {tools.map((t) => (
          <svg key={t.id} width="60" height="48" viewBox="0 0 60 48" className="block overflow-visible">
            {t.art}
            {t.more && <path d="M56.5 36.5 V43 H50Z" fill="#dcdcdc" />}
          </svg>
        ))}
      </div>
      <div className="mx-[8px] mt-[4px] h-[2px] shrink-0 bg-[#4a4a4a]" />
      {/* fill and stroke proxies overlap */}
      <div className="relative ml-[10px] mt-[7px] h-[110px] shrink-0">
        <div className="absolute left-[36px] top-[36px] h-[72px] w-[72px] border-2 border-[#2e2e2e]">
          <div className="h-full w-full border-2 border-white bg-black p-[14px]">
            <div className="h-full w-full border-2 border-white bg-[#535353]" />
          </div>
        </div>
        <div className="absolute left-0 top-0 h-[72px] w-[72px] border-2 border-[#2e2e2e] bg-white" />
        <svg width="24" height="24" viewBox="0 0 24 24" className="absolute left-[90px] top-[2px]">
          <path d="M6 6.5 H11 Q16.5 6.5 16.5 12 V17" fill="none" stroke="currentColor" strokeWidth="4" />
          <path d="M0 6.5 L7 0 V13Z M10 16 H23 L16.5 23Z" fill="currentColor" />
        </svg>
        <svg width="24" height="24" viewBox="0 0 24 24" className="absolute left-0 top-[82px]">
          <path d="M0 0 H18 V6 H24 V24 H6 V16 H0Z" fill="currentColor" />
          <path d="M8 8 H22 V22 H8Z" fill="#000" />
          <path d="M12 16 H16 V12" fill="none" stroke="#fff" strokeWidth="2" />
          <rect x="3" y="3" width="12" height="12" fill="#fff" stroke="#000" strokeWidth="2" />
        </svg>
      </div>
      <div className="ml-[10px] mt-[10px] flex h-[42px] w-[118px] shrink-0 items-center border-2 border-[#5c5c5c]">
        <span className="flex h-full w-[37px] items-center justify-center border-r-2 border-[#5c5c5c] bg-[#2e2e2e]"><span className="h-[26px] w-[26px] border-2 border-black bg-white" /></span>
        <span className="flex h-full w-[40px] items-center justify-center border-r-2 border-[#5c5c5c]"><span className="h-[26px] w-[26px] border-2 border-black bg-linear-to-r from-white to-[#403838]" /></span>
        <span className="flex flex-1 items-center justify-center">
          <svg width="26" height="26"><rect x="1" y="1" width="24" height="24" fill="#fff" stroke="#000" strokeWidth="2" /><path d="M3 23 L23 3" stroke="#f00" strokeWidth="5" /></svg>
        </span>
      </div>
      <div className="ml-[10px] mt-[9px] flex h-[37px] w-[118px] shrink-0 items-center border-2 border-[#5c5c5c]">
        {[0, 1, 2].map((n) => (
          <span key={n} className={clsx('flex h-full items-center justify-center', n === 0 ? 'w-[37px] bg-[#2e2e2e]' : 'w-[40px] border-l-2 border-[#5c5c5c]')}>
            <svg width="22" height="22" viewBox="0 0 22 22" opacity={n === 2 ? 0.3 : 1}>
              <circle cx="9" cy="9" r="8" fill="#6e6e6e" stroke="currentColor" strokeWidth="2" />
              {n === 2 ? <path d="M9 9 H17 L12 16Z" fill="currentColor" /> : <path d="M9 9 H21 V21 H9Z" fill="currentColor" />}
              {n === 1 && <circle cx="9" cy="9" r="8" fill="#6e6e6e" stroke="currentColor" strokeWidth="2" />}
            </svg>
          </span>
        ))}
      </div>
      <svg width="44" height="32" viewBox="0 0 44 32" className="ml-[48px] mt-[17px] shrink-0" fill="#6e6e6e" stroke="currentColor" strokeWidth="2">
        <path d="M1 9 H27 V31 H1Z" />
        <path d="M1 11 H27" strokeWidth="4" />
        <path d="M17 1 H43 V23 H17Z" />
        <path d="M17 3 H43" strokeWidth="4" />
      </svg>
      <div className="ml-[56px] mt-[44px] flex shrink-0 gap-[3px]">
        {[0, 1, 2].map((n) => <span key={n} className="h-[8px] w-[8px] rounded-full bg-[#d0d0d0]" />)}
      </div>
    </div>
  )
}

function StatusBar() {
  const field = 'flex h-full items-center bg-[#454545] text-white'
  const drop = 'flex h-full w-[36px] items-center justify-center border-x-2 border-[#5c5c5c] text-white'
  return (
    <div className="flex h-[33px] shrink-0 items-center border-b-2 border-t border-[#3a3a3a] bg-[#505050] text-[26px] leading-[26px]">
      <span className={clsx(field, 'ml-[8px] w-[101px] pl-[5px] pt-[4px]')}>39.09%</span>
      <span className={drop}><ChevronDown size={27} strokeWidth={2} /></span>
      <span className={clsx(field, 'ml-[8px] w-[100px] pl-[6px] pt-[4px]')}>0°</span>
      <span className={drop}><ChevronDown size={27} strokeWidth={2} /></span>
      <svg width="48" height="16" className="ml-[18px]" fill="#737373"><path d="M0 0 h3 v16 h-3z M16 0 V16 L5 8Z M47 0 V16 L37 8Z" /></svg>
      <span className={clsx(field, 'ml-[18px] w-[80px] pl-[6px] pt-[4px]')}>1</span>
      <span className={drop}><ChevronDown size={27} strokeWidth={2} /></span>
      <svg width="48" height="16" className="ml-[20px]" fill="#737373"><path d="M0 0 V16 L10 8Z M30 0 V16 L41 8Z M43 0 h3 v16 h-3z" /></svg>
      <span className="ml-[16px] flex h-full w-[401px] items-center justify-center border-x-2 border-[#484848] pt-[4px] text-[#d6d6d6]">选择</span>
      <svg width="10" height="16" className="ml-[13px] mr-[14px]" fill="#d6d6d6"><path d="M0 0 L10 8 L0 16Z" /></svg>
      <div className="flex h-full flex-1 items-center bg-[#464646]">
        <ChevronLeft size={26} strokeWidth={1.6} className="ml-[4px] text-[#a8a8a8]" />
        <span className="ml-[787px] h-[30px] w-[50px] rounded-[14px] bg-[#5c5c5c]" />
      </div>
    </div>
  )
}

function Watermark() {
  return (
    <svg width="2856" height="1596" className="pointer-events-none absolute left-0 top-0">
      <defs>
        <radialGradient id="fade" gradientUnits="userSpaceOnUse" cx="168" cy="168" r="185">
          <stop offset="0" stopColor="#fff" stopOpacity="0.16" />
          <stop offset="0.45" stopColor="#fff" stopOpacity="0.08" />
          <stop offset="1" stopColor="#fff" stopOpacity="0" />
        </radialGradient>
        <pattern id="mark" x="0" y="0" width="335.8" height="336" patternUnits="userSpaceOnUse" patternTransform="translate(0.5 0)">
          <path d="M151 149 L30 28 M185 149 L306 28 M151 186 L30 307 M185 186 L306 307" stroke="url(#fade)" strokeWidth="3" />
          <text x="168" y="170" textAnchor="middle" textLength="116" fontSize="21" fontWeight="800" fontStyle="italic" fill="#808080" fillOpacity="0.05" stroke="#808080" strokeOpacity="0.16" strokeWidth="0.9">MU木子素材</text>
          <text x="168" y="184" textAnchor="middle" textLength="102" fontSize="11" fontWeight="700" fill="#8a8a8a" fillOpacity="0.15">木子素材网Muzisucai.Com</text>
        </pattern>
      </defs>
      <rect width="2856" height="1596" fill="url(#mark)" />
    </svg>
  )
}

export default function App() {
  return (
    <div className="relative flex h-[1596px] w-[2856px] flex-col overflow-hidden bg-[#535353] font-['Lato','Noto_Sans_CJK_SC',sans-serif]">
      <TitleBar />
      <ControlBar />
      <div className="flex min-h-0 flex-1">
        <Toolbox />
        <div className="w-[6px] shrink-0 border-x-2 border-[#3a3a3a] bg-[#4a4a4a]" />
        <div className="flex min-w-0 flex-1 flex-col">
          <div className="flex h-[58px] shrink-0 border-b-2 border-[#3a3a3a] bg-[#434343]">
            <div className="flex w-[395px] items-center border-r-2 border-[#3a3a3a] bg-[#535353] pl-[10px] text-white">
              <X size={24} strokeWidth={2} />
              <span className="ml-[14px] whitespace-nowrap pb-[3px] text-[22px] font-medium">未标题-1* @ 39.09 % (RGB/预览)</span>
            </div>
          </div>
          <div className="flex min-h-0 flex-1">
            <div className="relative flex-1 overflow-hidden bg-[#606060]">
              <Artboard />
            </div>
            <div className="w-[12px] bg-[#4a4a4a]" />
          </div>
          <StatusBar />
        </div>
      </div>
      <GridDialog />
      <AppearancePanel />
      <LayersPanel />
      <Watermark />
    </div>
  )
}
